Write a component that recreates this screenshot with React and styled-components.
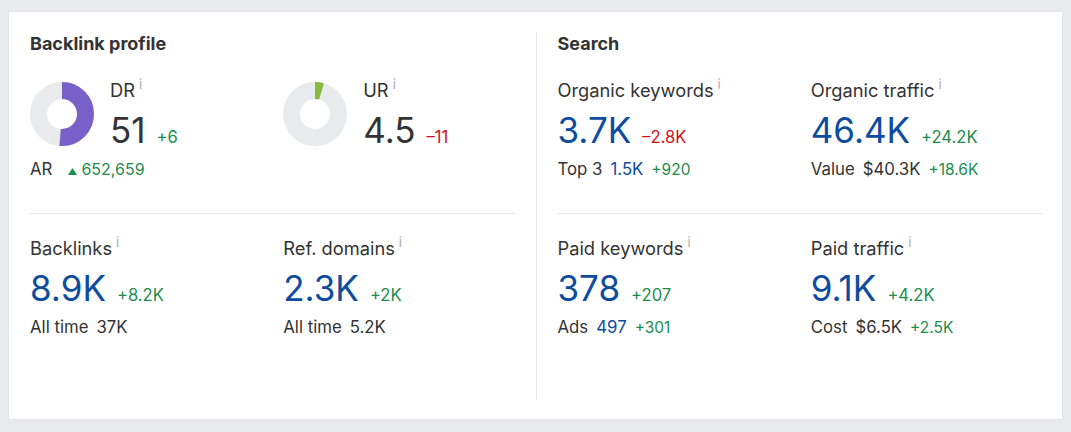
import React from 'react'
import styled, { createGlobalStyle } from 'styled-components'

const GlobalStyle = createGlobalStyle`
  body {
    margin: 0;
    background: #e9eaec;
    font-family: Inter, 'Noto Sans', sans-serif;
    color: #333;
  }
`

const colors = {
  dark: '#333333',
  blue: '#0e4ca0',
  green: '#1c8c4e',
  red: '#d0101a',
}

const Page = styled.div`
  padding: 11px 8px 12px;
`

const Card = styled.div`
  box-sizing: border-box;
  height: 409px;
  background: #fff;
  border: 1px solid #e3e5e8;
  padding: 20px 20px 19px 21px;
  display: grid;
  grid-template-columns: 1fr auto 1fr;
  column-gap: 21px;
`

const ColumnRule = styled.div`
  width: 1px;
  background: #e6e7ea;
`

const Column = styled.section`
  display: flex;
  flex-direction: column;
  min-width: 0;
`

const Title = styled.h2`
  margin: 0;
  font-size: 18px;
  line-height: 24px;
  font-weight: 700;
  color: #333;
`

const Block = styled.div`
  display: grid;
  grid-template-columns: 1fr 1fr;
  column-gap: 22px;
  padding: 22px 0 33px;
  & + & {
    border-top: 1px solid #e6e7ea;
  }
`

const Label = styled.div`
  font-size: 18.3px;
  line-height: 24px;
  color: #333;
  white-space: nowrap;
`

const Info = styled.span`
  margin-left: 4px;
  font-size: 13px;
  line-height: 0;
  vertical-align: 8px;
  color: #ababab;
`

const ValueRow = styled.div`
  margin-top: 8px;
  display: flex;
  align-items: baseline;
  gap: 11px;
  line-height: 40px;
`

const Value = styled.span`
  font-size: 35px;
  color: ${p => colors[p.$tone || 'blue']};
`

const Delta = styled.span`
  font-size: ${p => p.$size || 16.6}px;
  line-height: 20px;
  color: ${p => colors[p.$tone || 'green']};
  white-space: nowrap;
`

const SubRow = styled.div`
  margin-top: 8px;
  display: flex;
  align-items: baseline;
  gap: 8px;
  font-size: 16.8px;
  line-height: 22px;
`

const SubText = styled.span`
  color: ${p => colors[p.$tone || 'dark']};
  white-space: nowrap;
`

const GaugeRow = styled.div`
  display: flex;
  align-items: center;
  gap: 16px;
`

const ArRow = styled.div`
  margin-top: 8px;
  display: flex;
  align-items: baseline;
  font-size: 16.8px;
  line-height: 22px;
`

const ArGrowth = styled.span`
  margin-left: 16px;
  display: inline-flex;
  align-items: baseline;
  gap: 4px;
  font-size: 16px;
  color: ${colors.green};
`

const Donut = ({ pct, color }) => {
  const r = 23.5
  const c = 2 * Math.PI * r
  return (
    <svg width="64" height="64" viewBox="0 0 64 64">
      <circle cx="32" cy="32" r={r} fill="none" stroke="#e9eaec" strokeWidth="17" />
      <circle
        cx="32"
        cy="32"
        r={r}
        fill="none"
        stroke={color}
        strokeWidth="17"
        strokeDasharray={`${c * pct} ${c}`}
        transform="rotate(-90 32 32)"
      />
    </svg>
  )
}

const UpArrow = () => (
  <svg width="9" height="7" viewBox="0 0 9 7">
    <polygon points="4.5,0 9,7 0,7" fill={colors.green} />
  </svg>
)

const MetricLabel = ({ children }) => (
  <Label>
    {children}
    <Info>i</Info>
  </Label>
)

const Metric = ({ label, value, tone, delta, deltaTone, sub }) => (
  <div>
    <MetricLabel>{label}</MetricLabel>
    <ValueRow>
      <Value $tone={tone}>{value}</Value>
      <Delta $tone={deltaTone}>{delta}</Delta>
    </ValueRow>
    {sub && (
      <SubRow>
        {sub.map((s, i) =>
          s.delta ? (
            <Delta key={i} $size={15.5} $tone={s.tone}>{s.text}</Delta>
          ) : (
            <SubText key={i} $tone={s.tone}>{s.text}</SubText>
          )
        )}
      </SubRow>
    )}
  </div>
)

const Gauge = ({ label, value, delta, deltaTone, pct, color, children }) => (
  <div>
    <GaugeRow>
      <Donut pct={pct} color={color} />
      <div>
        <MetricLabel>{label}</MetricLabel>
        <ValueRow>
          <Value $tone="dark">{value}</Value>
          <Delta $tone={deltaTone}>{delta}</Delta>
        </ValueRow>
      </div>
    </GaugeRow>
    {children}
  </div>
)

export default function App() {
  return (
    <Page>
      <GlobalStyle />
      <Card>
        <Column>
          <Title>Backlink profile</Title>
          <Block>
            <Gauge label="DR" value="51" delta="+6" pct={0.51} color="#7761c8">
              <ArRow>
                <SubText>AR</SubText>
                <ArGrowth>
                  <UpArrow />
                  652,659
                </ArGrowth>
              </ArRow>
            </Gauge>
            <Gauge label="UR" value="4.5" delta="–11" deltaTone="red" pct={0.045} color="#86b93c" />
          </Block>
          <Block>
            <Metric
              label="Backlinks"
              value="8.9K"
              delta="+8.2K"
              sub={[{ text: 'All time' }, { text: '37K' }]}
            />
            <Metric
              label="Ref. domains"
              value="2.3K"
              delta="+2K"
              sub={[{ text: 'All time' }, { text: '5.2K' }]}
            />
          </Block>
        </Column>

        <ColumnRule />

        <Column>
          <Title>Search</Title>
          <Block>
            <Metric
              label="Organic keywords"
              value="3.7K"
              delta="–2.8K"
              deltaTone="red"
              sub={[
                { text: 'Top 3' },
                { text: '1.5K', tone: 'blue' },
                { text: '+920', delta: true },
              ]}
            />
            <Metric
              label="Organic traffic"
              value="46.4K"
              delta="+24.2K"
              sub={[
                { text: 'Value' },
                { text: '$40.3K' },
                { text: '+18.6K', delta: true },
              ]}
            />
          </Block>
          <Block>
            <Metric
              label="Paid keywords"
              value="378"
              delta="+207"
              sub={[
                { text: 'Ads' },
                { text: '497', tone: 'blue' },
                { text: '+301', delta: true },
              ]}
            />
            <Metric
              label="Paid traffic"
              value="9.1K"
              delta="+4.2K"
              sub={[
                { text: 'Cost' },
                { text: '$6.5K' },
                { text: '+2.5K', delta: true },
              ]}
            />
          </Block>
        </Column>
      </Card>
    </Page>
  )
}
